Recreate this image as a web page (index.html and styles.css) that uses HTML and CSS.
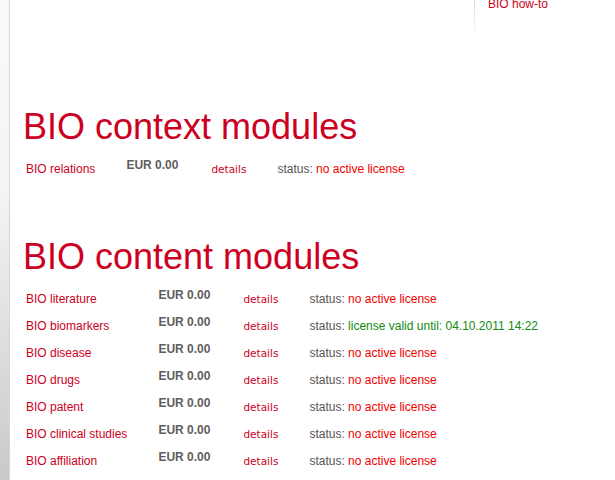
FILE: index.html
```html
<!DOCTYPE html>
<html lang="en">

<head>
  <meta charset="UTF-8" />
  <title>BIO modules</title>
  <link rel="stylesheet" href="styles.css">
</head>

<body>
  <div class="rail"></div>

  <div class="page">
    <div class="topnav">
      <div class="howto">
        <a href="#">BIO how-to</a>
      </div>
    </div>

    <h1 class="section-title first">BIO context modules</h1>
    <table class="modules">
      <tr>
        <td><a href="#">BIO relations</a></td>
        <td class="price">EUR 0.00</td>
        <td class="more"><a class="details" href="#">details</a></td>
        <td class="status">status: <span class="inactive">no active license</span></td>
      </tr>
    </table>

    <h1 class="section-title">BIO content modules</h1>
    <table class="modules">
      <tr>
        <td><a href="#">BIO literature</a></td>
        <td class="price">EUR 0.00</td>
        <td class="more"><a class="details" href="#">details</a></td>
        <td class="status">status: <span class="inactive">no active license</span></td>
      </tr>
      <tr>
        <td><a href="#">BIO biomarkers</a></td>
        <td class="price">EUR 0.00</td>
        <td class="more"><a class="details" href="#">details</a></td>
        <td class="status">status: <span class="valid">license valid until: 04.10.2011 14:22</span></td>
      </tr>
      <tr>
        <td><a href="#">BIO disease</a></td>
        <td class="price">EUR 0.00</td>
        <td class="more"><a class="details" href="#">details</a></td>
        <td class="status">status: <span class="inactive">no active license</span></td>
      </tr>
      <tr>
        <td><a href="#">BIO drugs</a></td>
        <td class="price">EUR 0.00</td>
        <td class="more"><a class="details" href="#">details</a></td>
        <td class="status">status: <span class="inactive">no active license</span></td>
      </tr>
      <tr>
        <td><a href="#">BIO patent</a></td>
        <td class="price">EUR 0.00</td>
        <td class="more"><a class="details" href="#">details</a></td>
        <td class="status">status: <span class="inactive">no active license</span></td>
      </tr>
      <tr>
        <td><a href="#">BIO clinical studies</a></td>
        <td class="price">EUR 0.00</td>
        <td class="more"><a class="details" href="#">details</a></td>
        <td class="status">status: <span class="inactive">no active license</span></td>
      </tr>
      <tr>
        <td><a href="#">BIO affiliation</a></td>
        <td class="price">EUR 0.00</td>
        <td class="more"><a class="details" href="#">details</a></td>
        <td class="status">status: <span class="inactive">no active license</span></td>
      </tr>
    </table>
  </div>
</body>

</html>
```

FILE: styles.css
```css
:root {
  --brand: #cc0022;
  --alert: #f20000;
  --ok: #118a11;
  --text: #555555;
}

* {
  box-sizing: border-box;
}

body {
  margin: 0;
  min-height: 100vh;
  display: flex;
  background: #ffffff;
  color: var(--text);
  font-family: 'Liberation Sans', Arial, sans-serif;
  font-size: 12px;
  overflow: hidden;
}

a {
  color: var(--brand);
  text-decoration: none;
}

/* shaded strip on the left edge */
.rail {
  width: 10px;
  flex-shrink: 0;
  background: linear-gradient(#fafafa, #f4f4f4 40%, #c9c9c9);
  border-right: 1px solid #d6d6d6;
}

.page {
  flex: 1;
  padding-left: 13px;
}

.topnav {
  display: flex;
  justify-content: flex-end;
  margin-top: -3px;
}

.howto {
  width: 141px;
  height: 40px;
  padding-left: 13px;
  border-left: 1px solid;
  border-image: linear-gradient(#d4d4d4, #eeeeee 60%, #ffffff) 1;
  line-height: 15px;
}

.section-title {
  margin: 54px 0 0;
  font-size: 36px;
  font-weight: normal;
  line-height: 40px;
  color: var(--brand);
}

.section-title.first {
  margin-top: 70px;
}

.modules {
  margin: 9px 0 0 3px;
  border-collapse: collapse;
}

.modules td {
  padding: 4px 31px 4px 0;
  line-height: 19px;
  vertical-align: top;
  white-space: nowrap;
}

.modules td.price {
  padding-top: 0;
  padding-right: 33px;
  font-weight: bold;
  color: #5e5e5e;
}

.details {
  font-family: 'DejaVu Sans', Verdana, sans-serif;
  font-size: 10.5px;
}

.inactive {
  color: var(--alert);
}

.valid {
  color: var(--ok);
}
```
